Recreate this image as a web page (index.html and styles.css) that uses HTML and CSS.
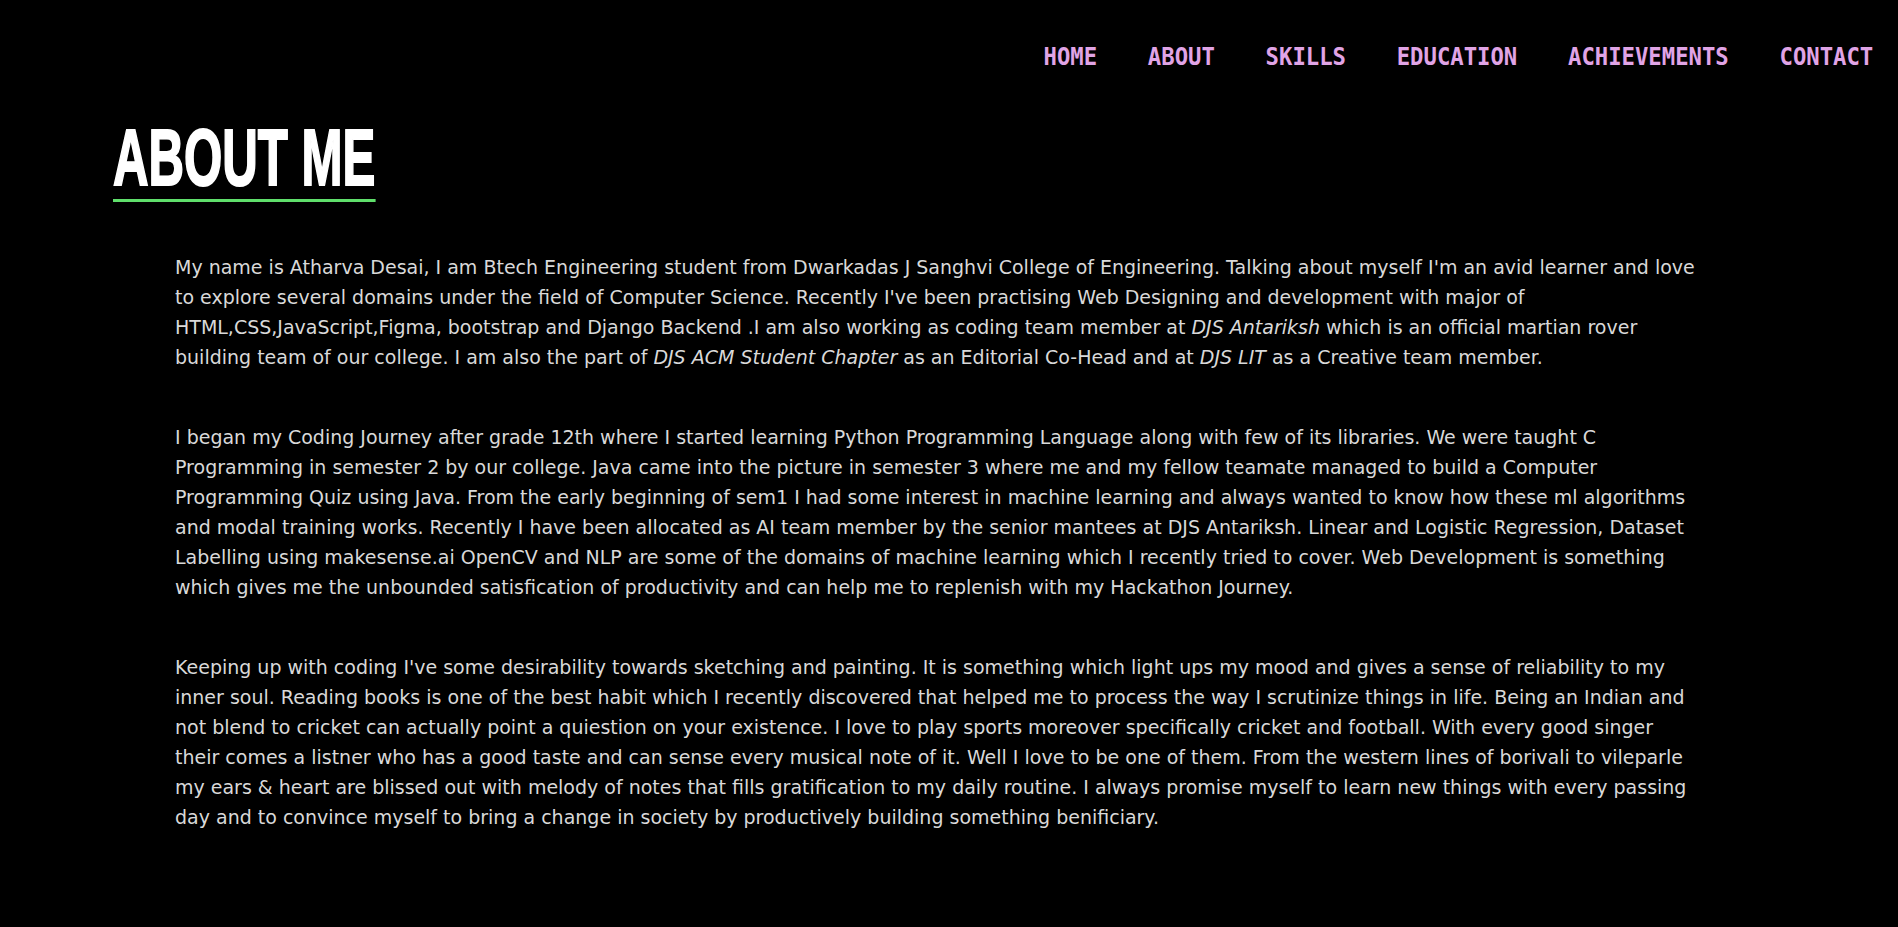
FILE: index.html
```html
<!DOCTYPE html>
<html lang="en">
<head>
<meta charset="utf-8">
<title>About Me</title>
<link rel="stylesheet" href="styles.css">
</head>
<body>
<header class="site-header">
  <nav class="nav">
    <a class="nav-link" href="#home">HOME</a>
    <a class="nav-link" href="#about">ABOUT</a>
    <a class="nav-link" href="#skills">SKILLS</a>
    <a class="nav-link" href="#education">EDUCATION</a>
    <a class="nav-link" href="#achievements">ACHIEVEMENTS</a>
    <a class="nav-link" href="#contact">CONTACT</a>
  </nav>
</header>
<main class="about">
  <h1 class="about-title">ABOUT ME</h1>
  <div class="about-text">
    <p>My name is Atharva Desai, I am Btech Engineering student from Dwarkadas J Sanghvi College of Engineering. Talking about myself I'm an avid learner and love to explore several domains under the field of Computer Science. Recently I've been practising Web Designing and development with major of HTML,CSS,JavaScript,Figma, bootstrap and Django Backend .I am also working as coding team member at <em>DJS Antariksh</em> which is an official martian rover building team of our college. I am also the part of <em>DJS ACM Student Chapter</em> as an Editorial Co-Head and at <em>DJS LIT</em> as a Creative team member.</p>
    <p>I began my Coding Journey after grade 12th where I started learning Python Programming Language along with few of its libraries. We were taught C Programming in semester 2 by our college. Java came into the picture in semester 3 where me and my fellow teamate managed to build a Computer Programming Quiz using Java. From the early beginning of sem1 I had some interest in machine learning and always wanted to know how these ml algorithms and modal training works. Recently I have been allocated as AI team member by the senior mantees at DJS Antariksh. Linear and Logistic Regression, Dataset Labelling using makesense.ai OpenCV and NLP are some of the domains of machine learning which I recently tried to cover. Web Development is something which gives me the unbounded satisfication of productivity and can help me to replenish with my Hackathon Journey.</p>
    <p>Keeping up with coding I've some desirability towards sketching and painting. It is something which light ups my mood and gives a sense of reliability to my inner soul. Reading books is one of the best habit which I recently discovered that helped me to process the way I scrutinize things in life. Being an Indian and not blend to cricket can actually point a quiestion on your existence. I love to play sports moreover specifically cricket and football. With every good singer their comes a listner who has a good taste and can sense every musical note of it. Well I love to be one of them. From the western lines of borivali to vileparle my ears &amp; heart are blissed out with melody of notes that fills gratification to my daily routine. I always promise myself to learn new things with every passing day and to convince myself to bring a change in society by productively building something benificiary.</p>
  </div>
</main>
</body>
</html>
```
FILE: styles.css
```css
html, body {
  margin: 0;
  padding: 0;
  background: #000;
}

body {
  color: #d9d9d9;
  font-family: "DejaVu Sans", sans-serif;
  min-height: 927px;
}

.site-header {
  display: flex;
  justify-content: flex-end;
  padding: 42px 25px 0 0;
}

.nav {
  display: flex;
  gap: 57px;
  transform: scaleX(0.89);
  transform-origin: right center;
}

.nav-link {
  font-family: "DejaVu Sans Mono", "Liberation Mono", monospace;
  font-weight: bold;
  font-size: 25px;
  line-height: 29px;
  color: #e0a4e6;
  text-decoration: none;
}

.about {
  padding: 0 0 0 113px;
}

.about-title {
  display: inline-block;
  margin: 47px 0 0;
  padding-bottom: 1px;
  font-family: "Liberation Sans Narrow", "Liberation Sans", sans-serif;
  font-weight: bold;
  font-size: 80px;
  line-height: 1;
  color: #fff;
  border-bottom: 3px solid #5fdf6b;
  -webkit-text-stroke: 2px #fff;
  transform: scaleX(0.615);
  transform-origin: left top;
}

.about-text {
  width: 1524px;
  margin: 50px 0 0 62px;
  font-size: 19px;
  line-height: 30px;
}

.about-text p {
  margin: 0 0 50px;
}
```
